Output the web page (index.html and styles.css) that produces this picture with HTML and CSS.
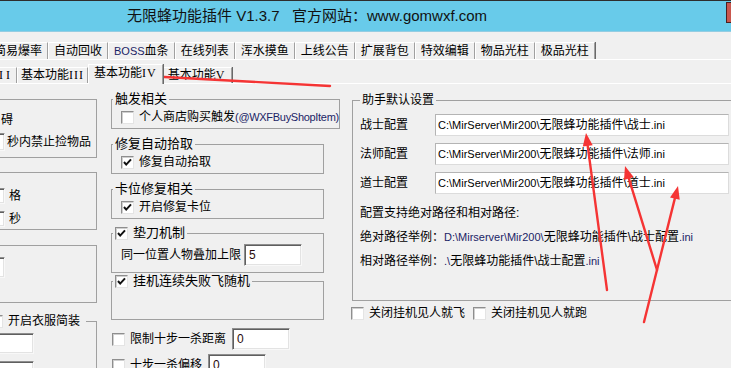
FILE: index.html
```html
<!DOCTYPE html>
<html lang="zh-CN">

<head>
    <meta charset="UTF-8">
    <meta name="viewport" content="width=device-width, initial-scale=1.0">
    <title>无限蜂功能插件</title>
    <link rel="stylesheet" href="styles.css">
</head>

<body>
    <div class="titlebar">
        <span class="title">无限蜂功能插件 V1.3.7&nbsp;&nbsp; 官方网站：www.gomwxf.com</span>
        <span class="close"></span>
    </div>

    <div class="tabs tabs-main">
        <span class="tab">简易爆率</span>
        <span class="tab">自动回收</span>
        <span class="tab"><span class="lat">BOSS</span>血条</span>
        <span class="tab">在线列表</span>
        <span class="tab">浑水摸鱼</span>
        <span class="tab">上线公告</span>
        <span class="tab">扩展背包</span>
        <span class="tab">特效编辑</span>
        <span class="tab">物品光柱</span>
        <span class="tab">极品光柱</span>
    </div>

    <div class="tabs tabs-sub">
        <span class="tab first">基本功能<span class="num">II</span></span>
        <span class="tab">基本功能<span class="num">III</span></span>
        <span class="tab active">基本功能<span class="num">IV</span></span>
        <span class="tab last">基本功能<span class="num">V</span></span>
    </div>

    <div class="page">
        <!-- left column, scrolled partly out of view -->
        <div class="col col-left">
            <div class="box box-1">
                <div class="cut">碍</div>
                <div class="row"><span class="inp"></span><span>秒内禁止捡物品</span></div>
            </div>
            <div class="box box-2">
                <div class="row"><span class="inp inp-sm"></span><span>格</span></div>
                <div class="row"><span class="inp inp-sm"></span><span>秒</span></div>
            </div>
            <div class="box box-3">
                <div class="row"><span class="inp"></span></div>
            </div>
            <fieldset class="grp grp-dress">
                <legend><label class="cb"><span class="check"></span>开启衣服简装</label></legend>
                <span class="inp inp-wide"></span>
                <span class="inp inp-wide"></span>
            </fieldset>
        </div>

        <!-- middle column -->
        <div class="col col-mid">
            <fieldset class="grp grp-long">
                <legend>触发相关</legend>
                <label class="cb"><span class="check"></span>个人商店购买触发<span class="lat">(@WXFBuyShopItem)</span></label>
            </fieldset>
            <fieldset class="grp">
                <legend>修复自动拾取</legend>
                <label class="cb"><span class="check on"><svg viewBox="0 0 11 11"><path d="M2 5l2.2 2.6L9 2.4"/></svg></span>修复自动拾取</label>
            </fieldset>
            <fieldset class="grp">
                <legend>卡位修复相关</legend>
                <label class="cb"><span class="check on"><svg viewBox="0 0 11 11"><path d="M2 5l2.2 2.6L9 2.4"/></svg></span>开启修复卡位</label>
            </fieldset>
            <fieldset class="grp grp-pad">
                <legend><label class="cb"><span class="check on"><svg viewBox="0 0 11 11"><path d="M2 5l2.2 2.6L9 2.4"/></svg></span>垫刀机制</label></legend>
                <div class="row">
                    <span>同一位置人物叠加上限</span>
                    <span class="inp inp-num">5</span>
                </div>
            </fieldset>
            <fieldset class="grp grp-empty">
                <legend><label class="cb"><span class="check on"><svg viewBox="0 0 11 11"><path d="M2 5l2.2 2.6L9 2.4"/></svg></span>挂机连续失败飞随机</label></legend>
            </fieldset>
            <div class="row line-1">
                <label class="cb"><span class="check"></span>限制十步一杀距离</label>
                <span class="inp inp-num">0</span>
            </div>
            <div class="row line-2">
                <label class="cb"><span class="check"></span>十步一杀偏移</label>
                <span class="inp inp-num">0</span>
            </div>
        </div>

        <!-- right column -->
        <div class="col col-right">
            <fieldset class="grp grp-paths">
                <legend>助手默认设置</legend>
                <div class="path-row">
                    <span class="path-label">战士配置</span>
                    <span class="field"><span class="lat">C:\MirServer\Mir200\</span>无限蜂功能插件\战士<span class="lat">.ini</span></span>
                </div>
                <div class="path-row">
                    <span class="path-label">法师配置</span>
                    <span class="field"><span class="lat">C:\MirServer\Mir200\</span>无限蜂功能插件\法师<span class="lat">.ini</span></span>
                </div>
                <div class="path-row">
                    <span class="path-label">道士配置</span>
                    <span class="field"><span class="lat">C:\MirServer\Mir200\</span>无限蜂功能插件\道士<span class="lat">.ini</span></span>
                </div>
                <div class="notes">
                    <p>配置支持绝对路径和相对路径:</p>
                    <p>绝对路径举例：<span class="lat">D:\Mirserver\Mir200\</span>无限蜂功能插件\战士配置<span class="lat">.ini</span></p>
                    <p>相对路径举例：<span class="lat">.\</span>无限蜂功能插件\战士配置<span class="lat">.ini</span></p>
                </div>
            </fieldset>
            <div class="row opts">
                <label class="cb"><span class="check"></span>关闭挂机见人就飞</label>
                <label class="cb"><span class="check"></span>关闭挂机见人就跑</label>
            </div>
        </div>
    </div>

    <!-- red annotation arrows drawn over the screenshot -->
    <svg class="marks" width="731" height="368" viewBox="0 0 731 368">
        <g class="arrow">
            <line x1="160" y1="76.7" x2="330" y2="86"/>
            <polygon points="148,76 159.7,81.7 160.3,71.7"/>
        </g>
        <g class="arrow">
            <line x1="587.7" y1="145.9" x2="607" y2="290"/>
            <polygon points="586,133 582.8,146.6 592.7,145.2"/>
        </g>
        <g class="arrow">
            <line x1="628.8" y1="178.4" x2="657" y2="270"/>
            <polygon points="625,166 624,179.9 633.6,176.9"/>
        </g>
        <g class="arrow">
            <line x1="674.8" y1="198.6" x2="644" y2="322"/>
            <polygon points="678,186 670,197.4 679.7,199.8"/>
        </g>
    </svg>
</body>

</html>
```

FILE: styles.css
```css
* {
    box-sizing: border-box;
    margin: 0;
    padding: 0;
}

body {
    position: relative;
    width: 731px;
    height: 368px;
    overflow: hidden;
    background: #f0f0f0;
    color: #000;
    font-family: "Liberation Sans", "Noto Sans CJK SC", sans-serif;
    font-size: 12px;
    line-height: 16px;
}

/* title bar */
.titlebar {
    display: flex;
    align-items: center;
    height: 32px;
    padding-left: 127px;
    background: #68cbea;
    border-top: 1px solid #2e2e2e;
    border-bottom: 1px solid #94cde2;
}

.title {
    font-family: "Liberation Sans", "Noto Sans CJK SC", sans-serif;
    font-size: 15px;
    line-height: 20px;
    color: #111;
    white-space: nowrap;
}

.close {
    align-self: flex-start;
    width: 20px;
    height: 21px;
    margin: 1px -15px 0 auto;
    background: #c9574e;
    border: 1px solid #4a2020;
}

/* tabs */
.tabs {
    display: flex;
    align-items: flex-end;
    border-bottom: 1px solid #fff;
    white-space: nowrap;
}

.tab {
    height: 17px;
    padding: 1px 5px 0;
    line-height: 15px;
    border-top: 1px solid #fff;
    border-left: 1px solid #fff;
    border-right: 1px solid #a0a0a0;
    box-shadow: 1px 0 0 #696969;
}

.tabs-main {
    height: 18px;
    margin-top: 10px;
    margin-left: -12px;
}

.tabs-sub {
    height: 19px;
    margin-top: 5px;
    margin-left: -53px;
}

.tabs-sub .tab {
    height: 16px;
    padding: 0 3px;
}

.tabs-sub .tab.first .num {
    letter-spacing: 3px;
}

.tabs-sub .tab.active {
    position: relative;
    z-index: 1;
    height: 20px;
    margin: 0 -2px -1px 0;
    padding: 1px 5px 0;
    background: #f0f0f0;
}

.tabs-sub .tab.last {
    padding: 0 6px;
}

.num {
    font-family: "Liberation Serif", serif;
    font-size: 12px;
    letter-spacing: 1px;
}

.lat {
    font-family: "Liberation Sans", sans-serif;
    font-size: 11px;
    color: #1b2466;
}

/* content */
.page {
    display: flex;
    align-items: flex-start;
    padding-top: 8px;
}

.col {
    flex: none;
}

.col-left {
    width: 207px;
    margin-left: -110px;
    padding-top: 7px;
}

.col-mid {
    width: 213px;
    margin-left: 14px;
    margin-top: -1px;
}

.col-right {
    width: 420px;
    margin-left: 28px;
}

.row {
    display: flex;
    align-items: center;
}

/* plain boxes in the left column */
.box {
    border: 1px solid #a0a0a0;
    padding-left: 74px;
}

.box .row span + span {
    margin-left: 2px;
}

.box-1 {
    height: 59px;
    padding-top: 12px;
}

.box-1 .cut {
    margin-left: 36px;
}

.box-1 .row {
    margin-top: 5px;
}

.box-2 {
    height: 58px;
    margin-top: 14px;
    padding-top: 15px;
}

.box-2 .row + .row {
    margin-top: 7px;
}

.box-2 .row span + span {
    margin-left: 4px;
}

.box-3 {
    height: 58px;
    margin-top: 15px;
    padding-top: 11px;
}

/* group boxes */
fieldset.grp {
    min-width: 0;
    border: 1px solid #a0a0a0;
    padding: 2px 8px 3px 9px;
}

legend {
    padding: 0 2px;
    margin-left: -8px;
    line-height: 16px;
}

.col-mid legend {
    font-size: 13px;
}

.col-mid .grp + .grp {
    margin-top: 7px;
}

.col-mid .grp-long {
    width: 229px;
}

.grp-long .lat {
    letter-spacing: -0.3px;
}

.col-mid .grp + .grp-pad {
    margin-top: 6px;
    padding: 3px 8px 6px 9px;
}

.col-mid .grp + .grp-empty {
    height: 47px;
    margin-top: 0;
}

.grp-pad .row span:first-child {
    margin-right: 3px;
}

.line-1 {
    margin-top: 8px;
    margin-left: 1px;
}

.line-2 {
    margin-top: 4px;
    margin-left: 1px;
}

.line-1 .cb,
.line-2 .cb {
    margin-right: 6px;
}

.col-left .grp-dress {
    margin-top: 10px;
    height: 80px;
    padding: 4px 0 0 83px;
}

.grp-dress legend {
    margin-left: 16px;
    padding: 0 6px 0 0;
}

.grp-dress .inp-wide {
    display: block;
    width: 60px;
    height: 21px;
    margin-bottom: 7px;
}

/* checkbox */
.cb {
    display: inline-flex;
    align-items: center;
    height: 16px;
    vertical-align: top;
    white-space: nowrap;
}

.check {
    flex: none;
    width: 13px;
    height: 13px;
    margin-right: 5px;
    background: #fff;
    border: 1px solid;
    border-color: #8e8e8e #e4e4e4 #e4e4e4 #8e8e8e;
    box-shadow: inset 1px 1px 0 #cfcfcf;
}

.check svg {
    display: block;
    width: 11px;
    height: 11px;
    fill: none;
    stroke: #111;
    stroke-width: 2;
}

/* text boxes */
.inp {
    display: inline-block;
    flex: none;
    width: 40px;
    height: 18px;
    background: #fff;
    border: 1px solid;
    border-color: #8e8e8e #f8f8f8 #f8f8f8 #8e8e8e;
    box-shadow: inset 1px 1px 0 #5f5f5f, inset -1px -1px 0 #e3e3e3;
}

.box-3 .inp {
    height: 21px;
}

.inp-sm {
    height: 16px;
}

.inp-num {
    width: 58px;
    height: 22px;
    padding: 2px 0 0 4px;
    line-height: 16px;
    color: #2a0a0a;
}

/* right column */
.col-right .grp-paths {
    height: 209px;
    padding: 6px 0 0 7px;
}

.grp-paths legend {
    margin-left: 0;
    padding: 0 2px;
    font-size: 12px;
}

.path-row {
    display: flex;
    align-items: center;
    height: 22px;
    margin-bottom: 7px;
}

.path-label {
    width: 75px;
}

.field {
    width: 294px;
    height: 22px;
    padding: 2px 0 0 2px;
    line-height: 17px;
    white-space: nowrap;
    background: #fff;
    border: 1px solid;
    border-color: #b4b4b4 #dcdcdc #dcdcdc #b4b4b4;
}

.field .lat {
    color: #000;
}

.notes {
    margin-top: 5px;
    line-height: 24px;
}

.opts {
    margin-top: 4px;
    margin-left: -1px;
}

.opts .cb + .cb {
    margin-left: 8px;
}

/* annotation overlay */
.marks {
    position: absolute;
    top: 0;
    left: 0;
    pointer-events: none;
}

.arrow line {
    stroke: #f53434;
    stroke-width: 2.4;
    stroke-linecap: round;
}

.arrow polygon {
    fill: #f53434;
}
```
